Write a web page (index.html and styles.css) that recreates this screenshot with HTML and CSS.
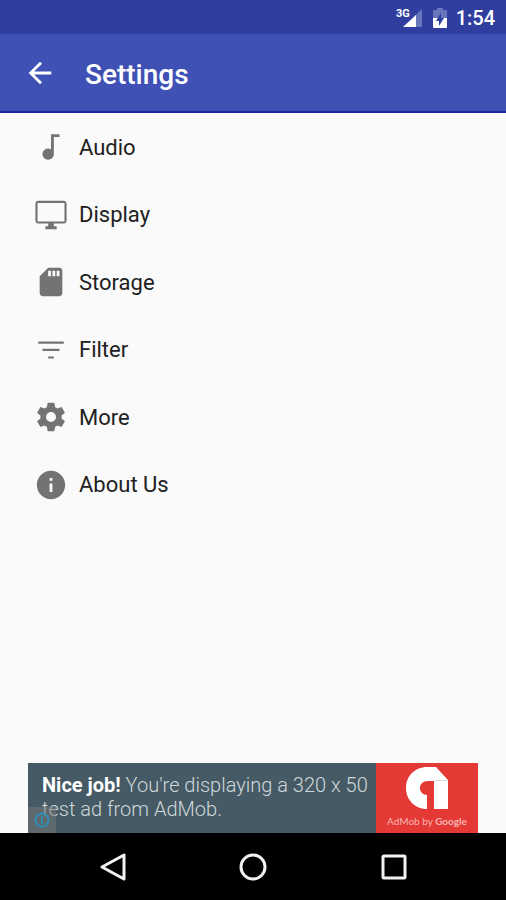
FILE: index.html
```html
<!DOCTYPE html>
<html lang="en">
<head>
<meta charset="utf-8">
<meta name="viewport" content="width=device-width, initial-scale=1">
<title>Settings</title>
<link rel="stylesheet" href="styles.css">
</head>
<body>
<div class="status-bar">
  <svg class="signal" viewBox="0 0 28 20" aria-hidden="true">
    <path class="faint" d="M26 1v18H7z"/>
    <path d="M20 7v12H7z"/>
    <text x="0" y="9">3G</text>
  </svg>
  <svg class="battery" viewBox="0 0 14 20" aria-hidden="true">
    <path class="faint" d="M4 0h6v2h3a1 1 0 0 1 1 1v7H0V3a1 1 0 0 1 1-1h3z"/>
    <path d="M0 10h14v9a1 1 0 0 1-1 1H1a1 1 0 0 1-1-1z"/>
    <path class="bolt" d="M8 5v5h3l-5 8v-5H3z"/>
  </svg>
  <time>1:54</time>
</div>
<header class="app-bar">
  <button class="back" type="button" aria-label="Back">
    <svg viewBox="0 0 24 24"><path d="M20 11H7.830l5.590-5.590L12 4l-8 8 8 8 1.410-1.410L7.830 13H20v-2z"/></svg>
  </button>
  <h1>Settings</h1>
</header>
<main>
  <ul class="settings">
    <li><a href="#audio"><svg viewBox="0 0 24 24"><path d="M12 3v10.550c-.59-.34-1.270-.55-2-.55-2.210 0-4 1.790-4 4s1.790 4 4 4 4-1.790 4-4V5h4V3z"/></svg>Audio</a></li>
    <li><a href="#display"><svg viewBox="0 0 24 24"><path d="M21 2H3c-1.100 0-2 .9-2 2v12c0 1.100.9 2 2 2h7v2H8v2h8v-2h-2v-2h7c1.100 0 2-.9 2-2V4c0-1.100-.9-2-2-2zm0 14.500H2.500v-13h19v13z"/></svg>Display</a></li>
    <li><a href="#storage"><svg viewBox="0 0 24 24"><path d="M18 2h-8L4.020 8 4 20c0 1.100.9 2 2 2h12c1.100 0 2-.9 2-2V4c0-1.100-.9-2-2-2zm-6 6h-2V4h2v4zm3 0h-2V4h2v4zm3 0h-2V4h2v4z"/></svg>Storage</a></li>
    <li><a href="#filter"><svg viewBox="0 0 24 24"><path d="M10 18h4v-1.500h-4V18zM3 6v1.500h18V6H3zm3 6.700h12v-1.500H6v1.500z"/></svg>Filter</a></li>
    <li><a href="#more"><svg viewBox="0 0 24 24"><path d="M19.430 12.980c.04-.32.07-.64.07-.98s-.03-.66-.07-.98l2.110-1.650c.19-.15.24-.42.12-.64l-2-3.460c-.12-.22-.39-.3-.61-.22l-2.490 1c-.52-.4-1.080-.73-1.690-.98l-.38-2.650C14.460 2.180 14.250 2 14 2h-4c-.25 0-.46.18-.49.42l-.38 2.650c-.61.25-1.170.59-1.690.98l-2.490-1c-.23-.09-.49 0-.61.22l-2 3.460c-.13.22-.07.49.12.64l2.110 1.650c-.04.32-.07.65-.07.98s.03.66.07.98l-2.110 1.650c-.19.15-.24.42-.12.64l2 3.460c.12.22.39.3.61.22l2.490-1c.52.4 1.080.73 1.690.98l.38 2.650c.03.24.24.42.49.42h4c.25 0 .46-.18.49-.42l.38-2.650c.61-.25 1.170-.59 1.690-.98l2.490 1c.23.09.49 0 .61-.22l2-3.460c.12-.22.07-.49-.12-.64l-2.110-1.650zM12 15.500c-1.930 0-3.500-1.570-3.500-3.500s1.570-3.500 3.500-3.500 3.500 1.570 3.500 3.500-1.570 3.500-3.500 3.500z"/></svg>More</a></li>
    <li><a href="#about"><svg viewBox="0 0 24 24"><path d="M12 2C6.480 2 2 6.480 2 12s4.480 10 10 10 10-4.480 10-10S17.520 2 12 2zm1 15h-2v-6h2v6zm0-8h-2V7h2v2z"/></svg>About Us</a></li>
  </ul>
</main>
<aside class="ad">
  <p><strong>Nice job!</strong> You're displaying a 320 x 50 test ad from AdMob.</p>
  <div class="brand">
    <svg viewBox="0 0 44 44" aria-hidden="true">
      <path d="M22 43C9 43 1 33 1 22 1 10 10 1 22 1H31L43 14V43H29V15H23C18 15 15 18 15 22 15 26 18 29 22 29Z"/>
      <path class="fold" d="M29 14.500h14"/>
    </svg>
    <span>AdMob by <b>Google</b></span>
  </div>
  <button class="ad-info" type="button" aria-label="Ad information">
    <svg viewBox="0 0 16 16"><circle cx="8" cy="8" r="6.500"/><path d="M8 7v5M8 4v2"/></svg>
  </button>
</aside>
<nav class="nav-bar" aria-label="System">
  <button type="button" aria-label="Back"><svg viewBox="0 0 28 28"><path d="M25 2v24L3 14z"/></svg></button>
  <button type="button" aria-label="Home"><svg viewBox="0 0 28 28"><circle cx="14" cy="14" r="12"/></svg></button>
  <button type="button" aria-label="Recent apps"><svg viewBox="0 0 28 28"><rect x="3" y="3" width="22" height="22" rx="1"/></svg></button>
</nav>
</body>
</html>
```
FILE: styles.css
```css
* {
  box-sizing: border-box;
}

body {
  margin: 0;
  min-height: 100vh;
  display: flex;
  flex-direction: column;
  background: #fafafa;
  color: #212121;
  font-family: Roboto, "Liberation Sans", sans-serif;
}

button {
  padding: 0;
  border: 0;
  background: none;
}

svg {
  display: block;
}

.status-bar {
  height: 34px;
  padding: 2px 11px 0 0;
  display: flex;
  align-items: center;
  justify-content: flex-end;
  background: #303f9f;
  color: #fff;
  fill: #fff;
}

.status-bar time {
  font-size: 20px;
  font-weight: 500;
}

.status-bar .faint {
  fill: #6874bb;
}

.signal {
  width: 28px;
  height: 20px;
  margin-right: 9px;
}

.signal text {
  font-size: 11px;
  font-weight: 700;
  stroke: #303f9f;
  stroke-width: 2px;
  paint-order: stroke;
}

.battery {
  width: 14px;
  height: 20px;
  margin-right: 9px;
}

.battery .bolt {
  fill: #303f9f;
}

.app-bar {
  height: 79px;
  padding-left: 23px;
  display: flex;
  align-items: center;
  gap: 28px;
  background: #3f51b5;
  border-bottom: 2px solid #1a2a9e;
  color: #fff;
}

.back svg {
  width: 34px;
  height: 34px;
  fill: #fff;
}

.app-bar h1 {
  margin: 0;
  padding-top: 3px;
  font-size: 28px;
  font-weight: 500;
}

main {
  flex: 1;
}

.settings {
  min-height: 405px;
  margin: 0;
  padding: 0;
  display: grid;
  grid-auto-rows: 1fr;
  list-style: none;
}

.settings a {
  height: 100%;
  padding: 1px 34px 0;
  display: flex;
  align-items: center;
  gap: 11px;
  color: inherit;
  font-size: 22px;
  text-decoration: none;
}

.settings svg {
  width: 34px;
  height: 34px;
  fill: #737373;
}

.ad {
  position: relative;
  min-height: 70px;
  margin: 0 28px;
  display: flex;
  background: #455a64;
}

.ad p {
  flex: 1;
  margin: 0;
  padding: 10px 0 0 14px;
  color: #cfd8dc;
  font-size: 20px;
  font-weight: 300;
  line-height: 24px;
}

.ad strong {
  color: #fff;
  font-weight: 700;
}

.brand {
  width: 102px;
  padding-top: 3px;
  display: flex;
  flex-direction: column;
  align-items: center;
  gap: 4px;
  background: #e53935;
  color: #f7b5b3;
  font-family: Lato, sans-serif;
  font-size: 10px;
  line-height: 14px;
}

.brand svg {
  width: 44px;
  height: 44px;
  fill: #fff;
}

.brand .fold {
  stroke: #ddd;
}

.brand b {
  font-weight: 700;
}

.ad-info {
  position: absolute;
  left: 0;
  bottom: 0;
  width: 28px;
  height: 26px;
  display: grid;
  place-items: center;
  background: rgba(120, 120, 120, 0.5);
}

.ad-info svg {
  width: 16px;
  height: 16px;
  fill: none;
  stroke: #2f8fb5;
  stroke-width: 2px;
}

.nav-bar {
  height: 67px;
  padding: 0 42px 0 43px;
  display: flex;
  align-items: center;
  background: #000;
}

.nav-bar button {
  flex: 1;
  display: grid;
  place-items: center;
}

.nav-bar svg {
  width: 28px;
  height: 28px;
  fill: none;
  stroke: #f2f2f2;
  stroke-width: 3px;
  stroke-linejoin: round;
}
```
